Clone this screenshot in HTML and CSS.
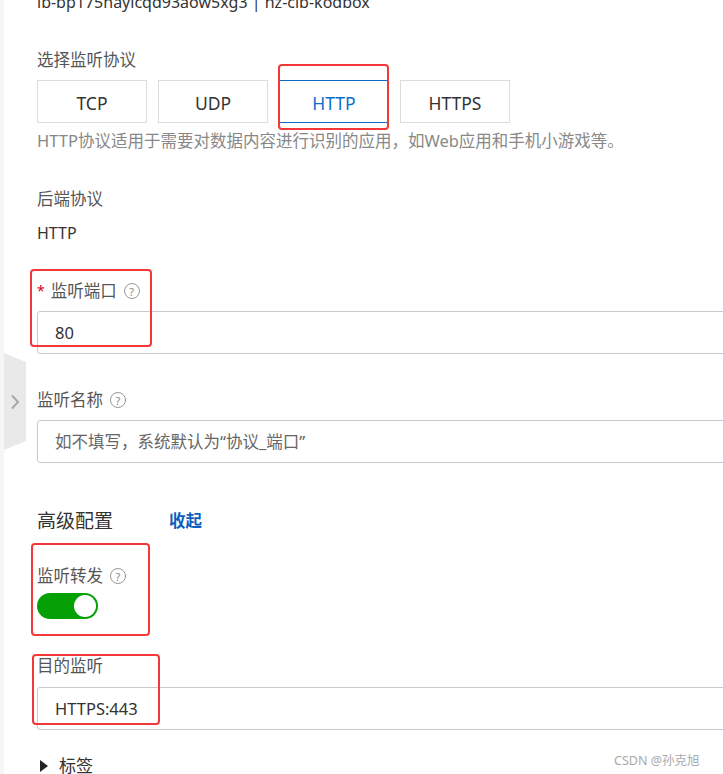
FILE: index.html
```html
<!DOCTYPE html>
<html lang="zh-CN">
<head>
  <meta charset="UTF-8">
  <title>监听配置</title>
  <meta name="viewport" content="width=device-width, initial-scale=1">
  <link rel="stylesheet" href="styles.css">
</head>
<body>
  <div class="side-tab">
    <svg width="10" height="16" viewBox="0 0 10 16"><path d="M2 1.5 L8 8 L2 14.5" fill="none" stroke="#a8a8a8" stroke-width="2"/></svg>
  </div>

  <main class="page">
    <div class="lb-name">lb-bp175hayicqd93aow5xg3 | hz-clb-kodbox</div>

    <section class="field field-proto">
      <div class="field-label">选择监听协议</div>
      <div class="proto-group">
        <button class="proto">TCP</button>
        <button class="proto">UDP</button>
        <button class="proto active">HTTP</button>
        <button class="proto">HTTPS</button>
      </div>
      <p class="hint">HTTP协议适用于需要对数据内容进行识别的应用，如Web应用和手机小游戏等。</p>
    </section>

    <section class="field">
      <div class="field-label">后端协议</div>
      <div class="field-value">HTTP</div>
    </section>

    <section class="field">
      <div class="field-label"><span class="required">*</span>监听端口<span class="help">?</span></div>
      <input class="text-input" type="text" value="80">
    </section>

    <section class="field">
      <div class="field-label">监听名称<span class="help">?</span></div>
      <input class="text-input" type="text" placeholder="如不填写，系统默认为“协议_端口”">
    </section>

    <div class="advanced">
      <span class="advanced-title">高级配置</span>
      <a class="collapse-link" href="#">收起</a>
    </div>

    <section class="field field-switch">
      <div class="field-label">监听转发<span class="help">?</span></div>
      <div class="switch on"><span class="knob"></span></div>
    </section>

    <section class="field field-target">
      <div class="field-label">目的监听</div>
      <input class="text-input" type="text" value="HTTPS:443">
    </section>

    <div class="tags-toggle"><span class="caret"></span>标签</div>
  </main>

  <!-- red annotation boxes drawn over the form -->
  <div class="mark mark-http"></div>
  <div class="mark mark-port"></div>
  <div class="mark mark-forward"></div>
  <div class="mark mark-target"></div>

  <div class="watermark">CSDN @孙克旭</div>
</body>
</html>
```

FILE: styles.css
```css
html, body { margin: 0; height: 774px; overflow: hidden; background: #fff; }
body { position: relative; font-family: "Noto Sans", "Noto Sans CJK SC", sans-serif; font-size: 16.5px; color: #555; border-left: 4px solid #f6f6f6; }

.page { padding-left: 33px; }

.lb-name { margin-top: -10px; line-height: 24px; color: #333; font-size: 16px; }

.field { margin-top: 34px; }
.field-proto { margin-top: 34px; }
.field-label { line-height: 24px; color: #555; display: flex; align-items: center; }
.field-value { margin-top: 10px; line-height: 24px; color: #333; font-size: 16px; }

.required { color: #d9001b; margin-right: 6px; font-size: 14px; }
.help { display: inline-flex; align-items: center; justify-content: center; width: 14px; height: 14px; margin-left: 7px; border: 1px solid #999; border-radius: 50%; font-size: 11px; line-height: 1; color: #888; }

.proto-group { display: flex; gap: 11px; margin-top: 8px; }
.proto { width: 110px; height: 43px; padding: 3px 0 0; border: 1px solid #ddd; background: #fff; font-family: inherit; font-size: 17.5px; color: #333; cursor: pointer; }
.proto.active { border-color: #0b6dc6 #fff; color: #0a6fcd; }

.hint { margin: 6px 0 0; line-height: 24px; color: #888; }

.text-input { display: block; box-sizing: border-box; width: 720px; height: 43px; margin-top: 8px; padding: 0 17px; border: 1px solid #c8c8d0; border-radius: 3px; font-family: inherit; font-size: 16.5px; color: #333; background: #fff; }
.text-input::placeholder { color: #666; }

.advanced { margin-top: 46px; line-height: 24px; display: flex; align-items: center; }
.advanced-title { font-size: 19px; color: #333; }
.collapse-link { margin-left: 56px; font-weight: bold; color: #0c5fc0; text-decoration: none; }

.field-switch { margin-top: 31px; }
.switch { width: 61px; height: 26px; margin-top: 5px; border-radius: 13px; background: #ccc; display: flex; align-items: center; padding: 0 2px; box-sizing: border-box; }
.switch.on { background: #05a005; justify-content: flex-end; }
.knob { width: 22px; height: 22px; border-radius: 50%; background: #fff; }

.field-target { margin-top: 35px; }
.field-target .text-input { margin-top: 9px; }

.tags-toggle { margin-top: 24px; line-height: 24px; color: #333; font-size: 17px; display: flex; align-items: center; padding-left: 3px; }
.caret { width: 0; height: 0; border-left: 8px solid #222; border-top: 6px solid transparent; border-bottom: 6px solid transparent; margin-right: 11px; }

.side-tab { position: absolute; left: 0; top: 353px; width: 22px; height: 97px; background: #e9e9e9; clip-path: polygon(0 0, 100% 9px, 100% 88px, 0 100%); display: flex; align-items: center; justify-content: center; }

.mark { position: absolute; border: 2px solid #f43737; border-radius: 4px; }
.mark-http { left: 274px; top: 64px; width: 107px; height: 62px; }
.mark-port { left: 26px; top: 269px; width: 118px; height: 74px; }
.mark-forward { left: 27px; top: 543px; width: 115px; height: 89px; }
.mark-target { left: 28px; top: 654px; width: 124px; height: 67px; }

.watermark { position: absolute; left: 610px; top: 750px; font-size: 12.5px; color: #aaa; font-family: "Noto Sans", "Noto Sans CJK SC", sans-serif; }
```
